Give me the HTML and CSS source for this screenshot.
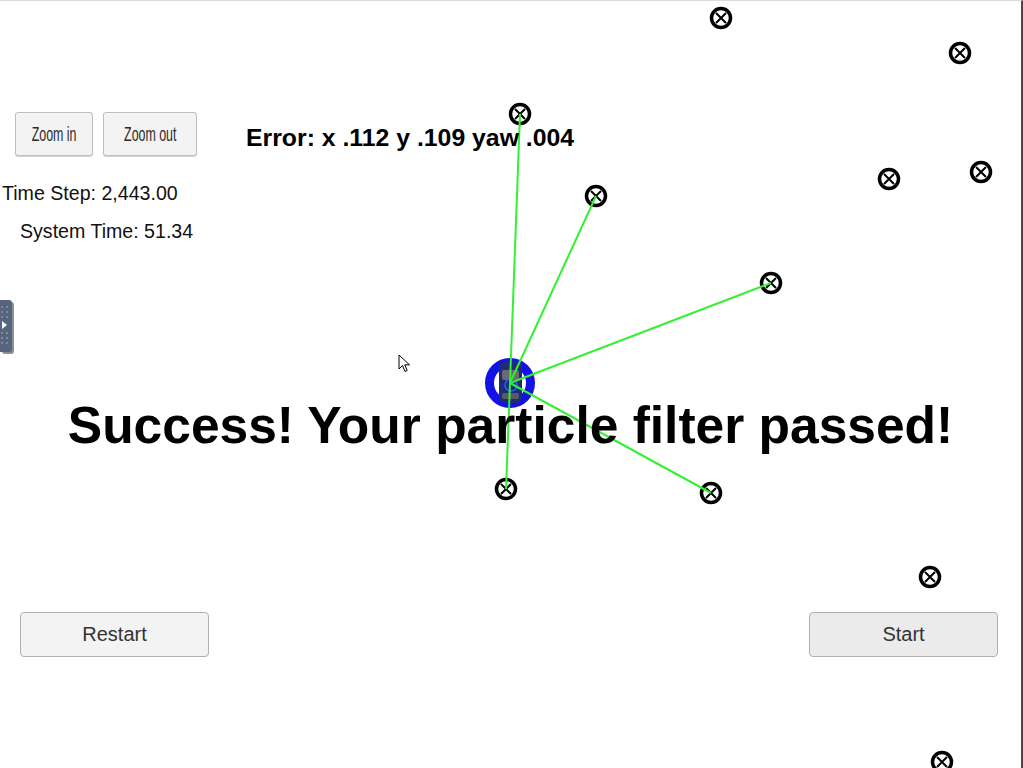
FILE: index.html
```html
<!DOCTYPE html>
<html>
<head>
<meta charset="utf-8">
<link rel="stylesheet" href="styles.css">
</head>
<body>
<div class="stage">
  <svg class="scene" width="1021" height="767" viewBox="0 1 1021 767">
    <defs>
      <g id="lm">
        <circle cx="0" cy="0" r="9.5" fill="#fff" stroke="#000" stroke-width="3.5"/>
        <path d="M-5 -5 L5 5 M5 -5 L-5 5" stroke="#000" stroke-width="2"/>
      </g>
    </defs>
    <use href="#lm" x="721" y="18"/>
    <use href="#lm" x="960" y="53"/>
    <use href="#lm" x="520" y="114"/>
    <use href="#lm" x="596" y="196"/>
    <use href="#lm" x="889" y="179"/>
    <use href="#lm" x="981" y="172"/>
    <use href="#lm" x="771" y="283"/>
    <use href="#lm" x="506" y="489"/>
    <use href="#lm" x="711" y="493"/>
    <use href="#lm" x="930" y="577"/>
    <use href="#lm" x="942" y="762"/>

    <circle cx="510" cy="383" r="20.5" fill="none" stroke="#1212e6" stroke-width="9"/>
    <rect x="499" y="361" width="23" height="42" rx="6" fill="#1c2c78"/>
    <rect x="502" y="370" width="17" height="10" rx="2" fill="#6a6a70"/>
    <rect x="502" y="393" width="17" height="6" rx="2" fill="#5a5a62"/>
    <circle cx="511" cy="385" r="6" fill="none" stroke="#3a5cff" stroke-width="1.5"/>

    <g stroke="#33f033" stroke-width="2">
      <line x1="510" y1="383" x2="520" y2="114"/>
      <line x1="510" y1="383" x2="596" y2="196"/>
      <line x1="510" y1="383" x2="771" y2="283"/>
      <line x1="510" y1="383" x2="711" y2="493"/>
      <line x1="510" y1="383" x2="506" y2="489"/>
    </g>
  </svg>

  <div class="hud">
    <div class="toolbar">
      <button class="zoom zoom-in"><span>Zoom in</span></button>
      <button class="zoom zoom-out"><span>Zoom out</span></button>
      <div class="error">Error: x .112 y .109 yaw .004</div>
    </div>
    <div class="times">
      <div class="time-step">Time Step: 2,443.00</div>
      <div class="system-time">System Time: 51.34</div>
    </div>
    <div class="banner">Success! Your particle filter passed!</div>
    <div class="controls">
      <button class="big restart">Restart</button>
      <button class="big start">Start</button>
    </div>
  </div>

  <div class="side-tab">
    <svg width="15" height="54" viewBox="0 0 15 54">
      <rect x="2" y="2" width="12" height="52" rx="3" fill="#8a8f98"/>
      <rect x="-4" y="0" width="16" height="52" rx="3" fill="#56657d"/>
      <g fill="#7a89a2">
        <rect x="1" y="6" width="2" height="2"/><rect x="6" y="6" width="2" height="2"/>
        <rect x="1" y="11" width="2" height="2"/><rect x="6" y="11" width="2" height="2"/>
        <rect x="1" y="16" width="2" height="2"/><rect x="6" y="16" width="2" height="2"/>
        <rect x="1" y="32" width="2" height="2"/><rect x="6" y="32" width="2" height="2"/>
        <rect x="1" y="37" width="2" height="2"/><rect x="6" y="37" width="2" height="2"/>
        <rect x="1" y="42" width="2" height="2"/><rect x="6" y="42" width="2" height="2"/>
      </g>
      <path d="M2 21 L7 25 L2 29 Z" fill="#fff"/>
    </svg>
  </div>

  <svg class="cursor" width="14" height="20" viewBox="0 0 14 20">
    <path d="M1 1 L1 15 L4.5 11.5 L7 17.5 L9.2 16.5 L6.8 10.8 L11.5 10.8 Z" fill="#fff" stroke="#000" stroke-width="1" stroke-linejoin="round"/>
  </svg>
</div>
</body>
</html>
```

FILE: styles.css
```css
html, body {
  margin: 0;
  padding: 0;
  background: #fff;
}

.stage {
  position: relative;
  width: 1021px;
  height: 767px;
  border-top: 1px solid #dcdcdc;
  border-right: 2px solid #4a4a4a;
  overflow: hidden;
  font-family: "Liberation Sans", Arial, sans-serif;
}

.scene {
  position: absolute;
  left: 0;
  top: 0;
}

.hud {
  position: relative;
  display: flex;
  flex-direction: column;
  height: 767px;
}

.toolbar {
  display: flex;
  align-items: flex-start;
  gap: 10px;
  margin-top: 111px;
  padding-left: 15px;
}

.zoom {
  height: 44px;
  padding: 0;
  margin: 0;
  background: #f3f3f3;
  border: 1px solid #bdbdbd;
  border-radius: 3px;
  box-shadow: 0 1px 0 #d6d6d6;
  color: #2a2a2a;
  font-family: "Liberation Sans", Arial, sans-serif;
  font-size: 20px;
  display: flex;
  align-items: center;
  justify-content: center;
  overflow: hidden;
}

.zoom span {
  display: inline-block;
  transform: scaleX(0.62);
  white-space: nowrap;
}

.zoom-in { width: 78px; }
.zoom-out { width: 94px; }

.error {
  margin-left: 39px;
  margin-top: 11px;
  font-size: 24.8px;
  line-height: 30px;
  font-weight: bold;
  color: #000;
  white-space: nowrap;
}

.times {
  margin-top: 25px;
  font-size: 19.6px;
  line-height: 24px;
  color: #111;
}

.time-step {
  margin-left: 2px;
}

.system-time {
  margin-top: 14px;
  margin-left: 20px;
}

.banner {
  margin-top: 152px;
  text-align: center;
  font-size: 51.5px;
  line-height: 60px;
  font-weight: bold;
  color: #000;
  white-space: nowrap;
}

.controls {
  display: flex;
  justify-content: space-between;
  margin-top: 157px;
  padding: 0 23px 0 20px;
}

.big {
  width: 189px;
  height: 45px;
  margin: 0;
  padding: 0;
  border: 1px solid #b0b0b0;
  border-radius: 4px;
  font-family: "Liberation Sans", Arial, sans-serif;
  font-size: 20px;
  color: #333;
}

.restart { background: #f3f3f3; }
.start { background: #ebebeb; }

.side-tab {
  position: absolute;
  left: 0;
  top: 299px;
  width: 15px;
  height: 54px;
}

.side-tab svg,
.cursor {
  display: block;
}

.cursor {
  position: absolute;
  left: 398px;
  top: 353px;
}
```
